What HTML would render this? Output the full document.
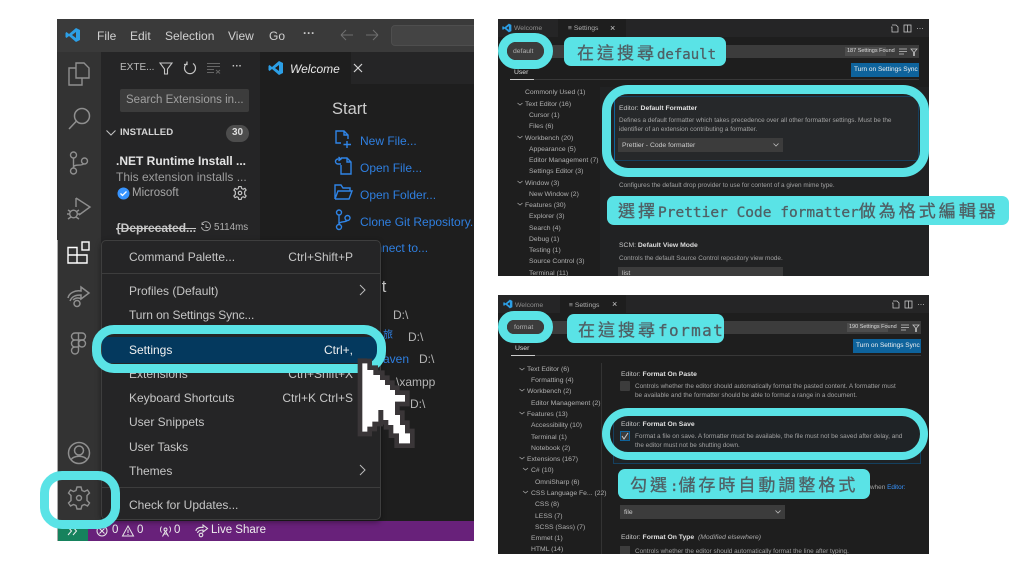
<!DOCTYPE html>
<html><head><meta charset="utf-8">
<style>
html,body{margin:0;padding:0;background:#fff}
#p{position:relative;width:1024px;height:576px;overflow:hidden;background:#fff;font-family:"Liberation Sans","Noto Sans CJK TC",sans-serif}
.b{position:absolute}
.t{position:absolute;white-space:nowrap;line-height:1;font-family:"Liberation Sans","Noto Sans CJK TC",sans-serif}
.r{position:absolute;white-space:nowrap;line-height:1;font-family:"Liberation Sans",sans-serif;text-align:right}
.m{font-size:12px;color:#c6c6c6}
.bl{color:#2f7fe0;font-size:12px}
.s{font-size:6.8px;color:#b0b0b0;margin-top:1px}
.d{font-size:6.4px;color:#a2a2a2;margin-top:.5px}
.lab{position:absolute;background:#5ae3e6;border-radius:7px;color:#4f6065;white-space:nowrap;font-family:"WenQuanYi Zen Hei","Noto Sans CJK TC",sans-serif;font-size:17px;letter-spacing:3px;-webkit-text-stroke:.3px #4f6065;box-sizing:border-box}
.lab span{font-family:"DejaVu Sans Mono",monospace}
.ring{position:absolute;border:8px solid #5ae3e6;box-sizing:border-box}
svg{position:absolute;overflow:visible}
</style></head><body><div id="p">

<!-- LEFT WINDOW -->
<div class="b" style="left:57px;top:19px;width:417px;height:522px;background:#1e1e1e"></div>
<div class="b" style="left:57px;top:19px;width:417px;height:33px;background:#3a3a3a"></div>
<div class="b" style="left:57px;top:52px;width:44px;height:469px;background:#333"></div>
<div class="b" style="left:101px;top:52px;width:159px;height:469px;background:#252526"></div>
<div class="b" style="left:260px;top:52px;width:214px;height:32px;background:#252526"></div>
<div class="b" style="left:260px;top:52px;width:91px;height:32px;background:#1e1e1e"></div>
<div class="b" style="left:57px;top:521px;width:417px;height:20px;background:#68217a"></div>
<div class="b" style="left:57px;top:521px;width:31px;height:20px;background:#16825d"></div>
<div class="b" style="left:57px;top:240px;width:1px;height:301px;background:#aaa"></div>

<svg style="left:65px;top:27px" width="16" height="16" viewBox="0 0 16 16"><path d="M11 1 L15 3 V13 L11 15 L4 9 L1.5 11 L0.5 10 V6 L1.5 5 L4 7 Z M11 5 L7 8 L11 11 Z" fill="#2c9fe6" fill-rule="evenodd"/></svg>
<div class="t m" style="left:97px;top:30px;color:#d0d0d0">File</div>
<div class="t m" style="left:130px;top:30px;color:#d0d0d0">Edit</div>
<div class="t m" style="left:165px;top:30px;color:#d0d0d0">Selection</div>
<div class="t m" style="left:228px;top:30px;color:#d0d0d0">View</div>
<div class="t m" style="left:269px;top:30px;color:#d0d0d0">Go</div>
<div class="t" style="left:303px;top:27px;font-size:12px;color:#c8c8c8;font-weight:bold">···</div>
<svg style="left:340px;top:28px" width="40" height="14" fill="none" stroke="#6f6f6f" stroke-width="1"><path d="M1 7H13M1 7L6 2M1 7L6 12M26 7H38M38 7L33 2M38 7L33 12"/></svg>
<div class="b" style="left:391px;top:25px;width:90px;height:21px;background:#444;border:1px solid #4e4e4e;border-radius:4px;box-sizing:border-box"></div>

<!-- activity icons -->
<svg style="left:68px;top:62px" width="22" height="24" fill="none" stroke="#8f8f8f" stroke-width="1.4"><path d="M8 1H16L21 6V16H8ZM8 6H1V23H14V16"/></svg>
<svg style="left:68px;top:107px" width="22" height="24" fill="none" stroke="#8f8f8f" stroke-width="1.5"><circle cx="14" cy="9" r="7.5"/><path d="M8.5 14L1 22"/></svg>
<svg style="left:69px;top:151px" width="20" height="24" fill="none" stroke="#8f8f8f" stroke-width="1.4"><circle cx="4.5" cy="4" r="3"/><circle cx="4.5" cy="20" r="3"/><circle cx="15.5" cy="10" r="3"/><path d="M4.5 7V17M4.5 16C5 13 13 15 14.5 13"/></svg>
<svg style="left:67px;top:196px" width="24" height="24" fill="none" stroke="#8f8f8f" stroke-width="1.4"><path d="M9 2L23 11L12 19M9 2V11"/><circle cx="6.5" cy="18" r="3.8"/><path d="M1 14L4 16M12 14L9 16M0 18H3M10 18H13M1 23L4 21M12 23L9 21"/></svg>
<svg style="left:67px;top:241px" width="24" height="26" fill="none" stroke="#fff" stroke-width="1.4"><path d="M1 6.5H10V22H1ZM1 14H20V22H10"/><rect x="15" y="1" width="7" height="8"/></svg>
<svg style="left:67px;top:286px" width="24" height="26" fill="none" stroke="#8f8f8f" stroke-width="1.5"><path d="M1 12C2 7 8 4 14 5V1L22 7L14 13V9C9 9 5 10 3 15"/><path d="M6 14C9 11 13 12 14 13"/><circle cx="10" cy="17.5" r="3"/></svg>
<svg style="left:71px;top:332px" width="16" height="22" fill="none" stroke="#8f8f8f" stroke-width="1.4"><path d="M7.5 1H4A3.5 3.5 0 0 0 4 8H7.5ZM7.5 1H11A3.5 3.5 0 0 1 11 8H7.5ZM7.5 8H4A3.5 3.5 0 0 0 4 15H7.5ZM7.5 8V15M7.5 15V18.5A3.5 3.5 0 1 1 4 15"/><circle cx="11" cy="11.5" r="3.5"/></svg>
<svg style="left:67px;top:441px" width="24" height="24" fill="none" stroke="#8f8f8f" stroke-width="1.5"><circle cx="12" cy="12" r="10.5"/><circle cx="12" cy="9.5" r="4.5"/><path d="M4 19C6 14 18 14 20 19"/></svg>
<svg style="left:67px;top:486px" width="24" height="24" viewBox="0 0 24 24" fill="none" stroke="#8f8f8f" stroke-width="1.4"><path d="M10 1H14L15 4.5L17.5 5.5L20.5 4L22.5 7L20 9.5V14.5L22.5 17L20.5 20L17.5 18.5L15 19.5L14 23H10L9 19.5L6.5 18.5L3.5 20L1.5 17L4 14.5V9.5L1.5 7L3.5 4L6.5 5.5L9 4.5Z"/><circle cx="12" cy="12" r="2.5"/></svg>

<!-- sidebar -->
<div class="t" style="left:120px;top:63px;font-size:10px;color:#bbb">EXTE...</div>
<svg style="left:159px;top:62px" width="14" height="13" fill="none" stroke="#c5c5c5" stroke-width="1.1"><path d="M1 1H13L8.5 7V12H5.5V7Z"/></svg>
<svg style="left:183px;top:61px" width="14" height="14" fill="none" stroke="#c5c5c5" stroke-width="1.2"><path d="M4 2.5A5.5 5.5 0 1 0 10 2.5M4 .5V3.5H1"/></svg>
<svg style="left:207px;top:62px" width="14" height="12" fill="none" stroke="#666" stroke-width="1"><path d="M0 1.5H13M0 4.5H13M0 7.5H7M0 10.5H7M9 8L13 11.5M13 8L9 11.5"/></svg>
<div class="t" style="left:232px;top:62px;font-size:10px;color:#c5c5c5;font-weight:bold">···</div>
<div class="b" style="left:120px;top:89px;width:129px;height:23px;background:#3c3c3c;border-radius:2px"></div>
<div class="t" style="left:126px;top:95px;font-size:11.500px;color:#a0a0a0">Search Extensions in...</div>
<svg style="left:106px;top:130px" width="10" height="6" fill="none" stroke="#c5c5c5"><path d="M.5 .5L5 5L9.5 .5"/></svg>
<div class="t" style="left:120px;top:128px;font-size:9.600px;color:#d5d5d5;font-weight:bold">INSTALLED</div>
<div class="b" style="left:226px;top:125px;width:23px;height:17px;background:#4d4d4d;border-radius:9px"></div>
<div class="t" style="left:232px;top:128px;font-size:10px;color:#ddd;font-weight:bold">30</div>
<div class="t" style="left:116px;top:155px;font-size:12px;color:#e4e4e4;font-weight:bold">.NET Runtime Install ...</div>
<div class="t" style="left:116px;top:171px;font-size:12px;color:#9d9d9d">This extension installs ...</div>
<svg style="left:117px;top:187px" width="13" height="13"><circle cx="6.5" cy="6.5" r="6" fill="#3794ff"/><path d="M3.5 6.5L5.5 8.5L9.5 4.5" stroke="#fff" fill="none" stroke-width="1.3"/></svg>
<div class="t" style="left:132px;top:188px;font-size:11.500px;color:#a8a8a8">Microsoft</div>
<svg style="left:233px;top:186px" width="14" height="14" viewBox="0 0 24 24" fill="none" stroke="#c5c5c5" stroke-width="2"><path d="M10 1H14L15 4.5L17.5 5.5L20.5 4L22.5 7L20 9.5V14.5L22.5 17L20.5 20L17.5 18.5L15 19.5L14 23H10L9 19.5L6.5 18.5L3.5 20L1.5 17L4 14.5V9.5L1.5 7L3.5 4L6.5 5.5L9 4.5Z"/><circle cx="12" cy="12" r="3"/></svg>
<div class="t" style="left:116px;top:222px;font-size:12px;color:#c8c8c8;font-weight:bold;text-decoration:line-through">{Deprecated...</div>
<svg style="left:201px;top:222px" width="10" height="10" fill="none" stroke="#b0b0b0" stroke-width=".9"><path d="M1 2A4.5 4.5 0 1 1 .5 5M1 .5V2.5H3M5 2.5V5.5H7.5"/></svg>
<div class="t" style="left:214px;top:223px;font-size:9.800px;color:#b0b0b0">5114ms</div>

<!-- editor -->
<svg style="left:268px;top:60px" width="16" height="16" viewBox="0 0 16 16"><path d="M11 1 L15 3 V13 L11 15 L4 9 L1.5 11 L0.5 10 V6 L1.5 5 L4 7 Z M11 5 L7 8 L11 11 Z" fill="#2c9fe6" fill-rule="evenodd"/></svg>
<div class="t m" style="left:290px;top:63px;font-style:italic;color:#e8e8e8">Welcome</div>
<svg style="left:353px;top:63px" width="10" height="10" stroke="#d5d5d5" stroke-width="1.2"><path d="M1 1L9 9M9 1L1 9"/></svg>
<div class="t" style="left:332px;top:101px;font-size:16.500px;color:#ccc">Start</div>
<svg style="left:334px;top:129px" width="19" height="20" fill="none" stroke="#2f84e6" stroke-width="1.4"><path d="M7 14H2V2H10L14 6V10M10 2V6H14M13 12V19M9.5 15.5H17"/></svg>
<div class="t bl" style="left:360px;top:135px">New File...</div>
<svg style="left:334px;top:156px" width="19" height="20" fill="none" stroke="#2f84e6" stroke-width="1.4"><path d="M7 2H13L17 6V18H7V9M13 2V6H17M7 8H4A2.5 2.5 0 0 1 4 3H6M4.5 1L7 3L4.5 5"/></svg>
<div class="t bl" style="left:360px;top:162px">Open File...</div>
<svg style="left:334px;top:184px" width="19" height="17" fill="none" stroke="#2f84e6" stroke-width="1.4"><path d="M1 15V1H7L9 4H16V7M1 15H15L18 7H4L1 15"/></svg>
<div class="t bl" style="left:360px;top:189px">Open Folder...</div>
<svg style="left:335px;top:209px" width="16" height="22" fill="none" stroke="#2f84e6" stroke-width="1.4"><circle cx="4" cy="3.5" r="2.5"/><circle cx="4" cy="18" r="2.5"/><circle cx="12.5" cy="9" r="2.5"/><path d="M4 6V15.5M4 15C4.5 12 11 13.5 12 11.5"/></svg>
<div class="t bl" style="left:360px;top:216px">Clone Git Repository...</div>
<div class="t bl" style="left:360px;top:242px">Connect to...</div>
<div class="t" style="left:334px;top:279px;font-size:16.500px;color:#ccc">Recent</div>
<div class="t" style="left:393px;top:309px;font-size:12px;color:#b5b5b5">D:\</div>
<div class="t bl" style="left:383px;top:331px;font-size:10px">旅</div>
<div class="t" style="left:408px;top:331px;font-size:12px;color:#b5b5b5">D:\</div>
<div class="t bl" style="left:373px;top:353px">maven</div>
<div class="t" style="left:419px;top:353px;font-size:12px;color:#b5b5b5">D:\</div>
<div class="t" style="left:396px;top:376px;font-size:12px;color:#b5b5b5">\xampp</div>
<div class="t" style="left:410px;top:398px;font-size:12px;color:#b5b5b5">D:\</div>

<div class="b" style="left:474px;top:19px;width:20px;height:522px;background:#fff"></div>

<!-- status -->
<svg style="left:67px;top:526px" width="11" height="10" fill="none" stroke="#eee"><path d="M1 1L4.5 5L1 9M6 1L9.5 5L6 9"/></svg>
<svg style="left:96px;top:525px" width="12" height="12" fill="none" stroke="#e8e8e8"><circle cx="6" cy="6" r="5"/><path d="M3.5 3.5L8.5 8.5M8.5 3.5L3.5 8.5"/></svg>
<div class="t" style="left:112px;top:525px;font-size:11.500px;color:#eee">0</div>
<svg style="left:122px;top:525px" width="12" height="12" fill="none" stroke="#e8e8e8"><path d="M6 1L11.5 11H.5ZM6 4.5V8M6 9V10"/></svg>
<div class="t" style="left:137px;top:525px;font-size:11.500px;color:#eee">0</div>
<svg style="left:159px;top:525px" width="13" height="12" fill="none" stroke="#e8e8e8"><circle cx="6.5" cy="4.5" r="1.5"/><path d="M6.5 6L3.5 11.5M6.5 6L9.5 11.5M2.5 1.5A5 5 0 0 0 2.5 7.5M10.5 1.5A5 5 0 0 1 10.5 7.5M4.5 9H8.5"/></svg>
<div class="t" style="left:174px;top:525px;font-size:11.500px;color:#eee">0</div>
<svg style="left:195px;top:524px" width="13" height="14" fill="none" stroke="#e8e8e8" stroke-width="1.1"><path d="M1 7C1 4 5 3 8 3.5V1L12.5 4.5L8 8V6C5 6 3 7 2.5 9"/><circle cx="6" cy="11" r="1.8"/></svg>
<div class="t" style="left:211px;top:525px;font-size:11.500px;color:#eee">Live Share</div>

<!-- menu -->
<div class="b" style="left:101px;top:240px;width:280px;height:280px;background:#252526;border:1px solid #3e3e3e;border-radius:5px;box-sizing:border-box;box-shadow:0 2px 6px rgba(0,0,0,.4)"></div>
<div class="b" style="left:102px;top:273px;width:278px;height:1px;background:#3d3d3d"></div>
<div class="b" style="left:102px;top:487px;width:278px;height:1px;background:#3d3d3d"></div>
<div class="t m" style="left:129px;top:251px">Command Palette...</div>
<div class="r m" style="right:671px;top:251px">Ctrl+Shift+P</div>
<div class="t m" style="left:129px;top:285px">Profiles (Default)</div>
<svg style="left:359px;top:284px" width="7" height="12" fill="none" stroke="#bbb"><path d="M1 1L6 6L1 11"/></svg>
<div class="t m" style="left:129px;top:309px;letter-spacing:-.1px">Turn on Settings Sync...</div>
<div class="b" style="left:102px;top:337px;width:278px;height:26px;background:#04395e"></div>
<div class="t m" style="left:129px;top:344px;color:#f0f0f0">Settings</div>
<div class="r m" style="right:671px;top:344px;color:#f0f0f0">Ctrl+,</div>
<div class="t m" style="left:129px;top:368px">Extensions</div>
<div class="r m" style="right:671px;top:368px">Ctrl+Shift+X</div>
<div class="t m" style="left:129px;top:392px">Keyboard Shortcuts</div>
<div class="r m" style="right:671px;top:392px">Ctrl+K Ctrl+S</div>
<div class="t m" style="left:129px;top:416px">User Snippets</div>
<div class="t m" style="left:129px;top:441px">User Tasks</div>
<div class="t m" style="left:129px;top:465px">Themes</div>
<svg style="left:359px;top:464px" width="7" height="12" fill="none" stroke="#bbb"><path d="M1 1L6 6L1 11"/></svg>
<div class="t m" style="left:129px;top:499px">Check for Updates...</div>

<div class="ring" style="left:92px;top:325px;width:294px;height:48px;border-width:9px;border-radius:22px"></div>
<div class="ring" style="left:40px;top:471px;width:80px;height:58px;border-width:9px;border-radius:22px"></div>

<!-- cursor -->
<svg style="left:250px;top:270px" width="230" height="290" viewBox="0 0 690 870">
<path d="M337 265V485H352V470H367V455H385V420H400V450H415V465H430V490H447V520H480V490H465V465H450V435H435V395H465V375H435V360H420V345H405V330H390V315H370V300H352V280H337Z" fill="#fff" stroke="#3a3638" stroke-width="28" paint-order="stroke"/>
</svg>

<!-- RIGHT TOP -->
<div class="b" style="left:498px;top:19px;width:431px;height:257px;background:#1e1e1e"></div>
<div class="b" style="left:498px;top:19px;width:431px;height:18px;background:#252526"></div>
<div class="b" style="left:558px;top:19px;width:68px;height:18px;background:#1e1e1e"></div>
<svg style="left:502px;top:23px" width="10" height="10" viewBox="0 0 16 16"><path d="M11 1 L15 3 V13 L11 15 L4 9 L1.5 11 L0.5 10 V6 L1.5 5 L4 7 Z M11 5 L7 8 L11 11 Z" fill="#2c9fe6" fill-rule="evenodd"/></svg>
<div class="t s" style="left:514px;top:25px;color:#8f8f8f">Welcome</div>
<div class="t s" style="left:568px;top:25px">≡ Settings</div>
<div class="t" style="left:610px;top:24px;font-size:9px;color:#ccc">×</div>
<svg style="left:890px;top:24px" width="34" height="9" fill="none" stroke="#c5c5c5" stroke-width=".8"><path d="M2 1H6L8 3V8H2V3H1"/><rect x="14" y="1" width="7" height="7"/><path d="M17.5 1V8M27 4.5H28M29.5 4.5H30.5M32 4.5H33"/></svg>
<div class="b" style="left:509px;top:45px;width:410px;height:13px;background:#3c3c3c"></div>
<div class="b" style="left:845px;top:47px;width:41px;height:9px;background:#4d4d4d"></div>
<div class="t" style="left:847px;top:49px;font-size:5.500px;color:#ddd">187 Settings Found</div>
<svg style="left:899px;top:48px" width="19" height="8" fill="none" stroke="#c5c5c5" stroke-width=".8"><path d="M0 1H8M0 3.5H8M0 6H5M12 1H18L15.5 4V7.5H14.5V4Z"/></svg>
<div class="b" style="left:851px;top:63px;width:68px;height:14px;background:#0e639c"></div>
<div class="t" style="left:854px;top:67px;font-size:6.500px;color:#f0f0f0">Turn on Settings Sync</div>
<div class="b" style="left:510px;top:79px;width:409px;height:1px;background:#383838"></div>
<div class="b" style="left:510px;top:79px;width:24px;height:1px;background:#ccc"></div>
<div class="b" style="left:600px;top:87px;width:329px;height:189px;background:#212223"></div>
<div class="t s" style="left:525px;top:89px">Commonly Used (1)</div>
<div class="t s" style="left:525px;top:101px">Text Editor (16)</div>
<div class="t s" style="left:529px;top:112px">Cursor (1)</div>
<div class="t s" style="left:529px;top:123px">Files (6)</div>
<div class="t s" style="left:525px;top:135px">Workbench (20)</div>
<div class="t s" style="left:529px;top:146px">Appearance (5)</div>
<div class="t s" style="left:529px;top:157px">Editor Management (7)</div>
<div class="t s" style="left:529px;top:168px">Settings Editor (3)</div>
<div class="t s" style="left:525px;top:180px">Window (3)</div>
<div class="t s" style="left:529px;top:191px">New Window (2)</div>
<div class="t s" style="left:525px;top:202px">Features (30)</div>
<div class="t s" style="left:529px;top:213px">Explorer (3)</div>
<div class="t s" style="left:529px;top:225px">Search (4)</div>
<div class="t s" style="left:529px;top:236px">Debug (1)</div>
<div class="t s" style="left:529px;top:247px">Testing (1)</div>
<div class="t s" style="left:529px;top:258px">Source Control (3)</div>
<div class="t s" style="left:529px;top:270px">Terminal (11)</div>
<svg style="left:517px;top:102px" width="6" height="170" fill="none" stroke="#aaa" stroke-width=".7"><path d="M.5 1L3 3L5.5 1M.5 34L3 36L5.5 34M.5 79L3 81L5.5 79M.5 101L3 103L5.5 101"/></svg>
<div class="b" style="left:614px;top:96px;width:305px;height:65px;background:#26282a;border:1px solid #15405f;border-left:1px solid #0e639c;box-sizing:border-box"></div>
<div class="t s" style="left:619px;top:105px;color:#c8c8c8">Editor: <b style="color:#e0e0e0">Default Formatter</b></div>
<div class="t d" style="left:619px;top:117px">Defines a default formatter which takes precedence over all other formatter settings. Must be the</div>
<div class="t d" style="left:619px;top:126px">identifier of an extension contributing a formatter.</div>
<div class="b" style="left:618px;top:138px;width:165px;height:14px;background:#3c3c3c"></div>
<div class="t s" style="left:622px;top:142px;color:#ccc">Prettier - Code formatter</div>
<svg style="left:773px;top:143px" width="6" height="4" fill="none" stroke="#bbb" stroke-width=".8"><path d="M.5 .5L3 3L5.5 .5"/></svg>
<div class="ring" style="left:602px;top:85px;width:327px;height:92px;border-width:9px;border-radius:26px"></div>
<div class="t d" style="left:619px;top:182px">Configures the default drop provider to use for content of a given mime type.</div>
<div class="t s" style="left:619px;top:242px;color:#c8c8c8">SCM: <b style="color:#ddd">Default View Mode</b></div>
<div class="t d" style="left:619px;top:255px">Controls the default Source Control repository view mode.</div>
<div class="b" style="left:618px;top:267px;width:165px;height:9px;background:#3c3c3c"></div>
<div class="t s" style="left:622px;top:270px;color:#ccc">list</div>
<div class="ring" style="left:498px;top:33px;width:55px;height:36px;border-width:9px;border-radius:18px"></div>
<div class="b" style="left:507px;top:42px;width:37px;height:18px;background:#3c3c3c;border-radius:9px"></div>
<div class="t s" style="left:513px;top:48px">default</div>
<div class="t s" style="left:514px;top:69px;color:#ddd">User</div>
<div class="lab" style="left:564px;top:37px;width:162px;height:29px;padding-left:13px;line-height:29px">在這搜尋<span style="font-size:14px;letter-spacing:0">default</span></div>
<div class="lab" style="left:607px;top:196px;width:402px;height:29px;padding-left:11px;line-height:28px">選擇<span style="font-size:14.500px;letter-spacing:0">Prettier Code formatter</span>做為格式編輯器</div>

<!-- RIGHT BOTTOM -->
<div class="b" style="left:498px;top:295px;width:431px;height:259px;background:#1e1e1e"></div>
<div class="b" style="left:498px;top:295px;width:431px;height:18px;background:#252526"></div>
<div class="b" style="left:560px;top:295px;width:66px;height:18px;background:#1e1e1e"></div>
<svg style="left:503px;top:299px" width="10" height="10" viewBox="0 0 16 16"><path d="M11 1 L15 3 V13 L11 15 L4 9 L1.5 11 L0.5 10 V6 L1.5 5 L4 7 Z M11 5 L7 8 L11 11 Z" fill="#2c9fe6" fill-rule="evenodd"/></svg>
<div class="t s" style="left:515px;top:302px;color:#8f8f8f">Welcome</div>
<div class="t s" style="left:569px;top:302px">≡ Settings</div>
<div class="t" style="left:612px;top:300px;font-size:9px;color:#ccc">×</div>
<svg style="left:891px;top:300px" width="34" height="9" fill="none" stroke="#c5c5c5" stroke-width=".8"><path d="M2 1H6L8 3V8H2V3H1"/><rect x="14" y="1" width="7" height="7"/><path d="M17.5 1V8M27 4.5H28M29.5 4.5H30.5M32 4.5H33"/></svg>
<div class="b" style="left:511px;top:321px;width:410px;height:13px;background:#3c3c3c"></div>
<div class="b" style="left:847px;top:323px;width:41px;height:9px;background:#4d4d4d"></div>
<div class="t" style="left:849px;top:325px;font-size:5.500px;color:#ddd">190 Settings Found</div>
<svg style="left:901px;top:324px" width="19" height="8" fill="none" stroke="#c5c5c5" stroke-width=".8"><path d="M0 1H8M0 3.5H8M0 6H5M12 1H18L15.5 4V7.5H14.5V4Z"/></svg>
<div class="b" style="left:853px;top:339px;width:68px;height:14px;background:#0e639c"></div>
<div class="t" style="left:856px;top:343px;font-size:6.500px;color:#f0f0f0">Turn on Settings Sync</div>
<div class="b" style="left:511px;top:355px;width:410px;height:1px;background:#383838"></div>
<div class="b" style="left:511px;top:355px;width:24px;height:1px;background:#ccc"></div>
<div class="b" style="left:601px;top:363px;width:1px;height:191px;background:#333"></div>
<div class="t s" style="left:527px;top:366px">Text Editor (6)</div>
<div class="t s" style="left:531px;top:377px">Formatting (4)</div>
<div class="t s" style="left:527px;top:388px">Workbench (2)</div>
<div class="t s" style="left:531px;top:400px">Editor Management (2)</div>
<div class="t s" style="left:527px;top:411px">Features (13)</div>
<div class="t s" style="left:531px;top:422px">Accessibility (10)</div>
<div class="t s" style="left:531px;top:434px">Terminal (1)</div>
<div class="t s" style="left:531px;top:445px">Notebook (2)</div>
<div class="t s" style="left:527px;top:456px">Extensions (167)</div>
<div class="t s" style="left:531px;top:467px">C# (10)</div>
<div class="t s" style="left:535px;top:479px">OmniSharp (6)</div>
<div class="t s" style="left:531px;top:490px">CSS Language Fe... (22)</div>
<div class="t s" style="left:535px;top:501px">CSS (8)</div>
<div class="t s" style="left:535px;top:513px">LESS (7)</div>
<div class="t s" style="left:535px;top:524px">SCSS (Sass) (7)</div>
<div class="t s" style="left:531px;top:535px">Emmet (1)</div>
<div class="t s" style="left:531px;top:546px">HTML (14)</div>
<svg style="left:519px;top:367px" width="12" height="135" fill="none" stroke="#aaa" stroke-width=".7"><path d="M.5 1L3 3L5.5 1M.5 22L3 24L5.5 22M.5 45L3 47L5.5 45M.5 90L3 92L5.5 90M4 101L6.5 103L9 101M4 124L6.5 126L9 124"/></svg>
<div class="t s" style="left:621px;top:371px;color:#c8c8c8">Editor: <b style="color:#e0e0e0">Format On Paste</b></div>
<div class="b" style="left:620px;top:381px;width:10px;height:10px;background:#3c3c3c;border-radius:1px"></div>
<div class="t d" style="left:635px;top:383px">Controls whether the editor should automatically format the pasted content. A formatter must</div>
<div class="t d" style="left:635px;top:392px">be available and the formatter should be able to format a range in a document.</div>
<div class="b" style="left:613px;top:415px;width:308px;height:49px;background:#1f2326;border:1px solid #15405f;box-sizing:border-box"></div>
<div class="t s" style="left:621px;top:421px;color:#c8c8c8">Editor: <b style="color:#e0e0e0">Format On Save</b></div>
<div class="b" style="left:620px;top:431px;width:10px;height:10px;background:#3c3c3c;border:1px solid #0e639c;box-sizing:border-box"></div>
<svg style="left:620px;top:431px" width="10" height="10" fill="none" stroke="#ccc" stroke-width="1"><path d="M2 5L4 8L8 2"/></svg>
<div class="t d" style="left:635px;top:433px">Format a file on save. A formatter must be available, the file must not be saved after delay, and</div>
<div class="t d" style="left:635px;top:442px">the editor must not be shutting down.</div>
<div class="ring" style="left:602px;top:408px;width:326px;height:52px;border-width:8px;border-radius:26px"></div>
<div class="t d" style="left:870px;top:484px">when <span style="color:#3794ff">Editor:</span></div>
<div class="b" style="left:620px;top:505px;width:165px;height:14px;background:#3c3c3c"></div>
<div class="t s" style="left:624px;top:509px;color:#ccc">file</div>
<svg style="left:775px;top:510px" width="6" height="4" fill="none" stroke="#bbb" stroke-width=".8"><path d="M.5 .5L3 3L5.5 .5"/></svg>
<div class="t s" style="left:621px;top:534px;color:#c8c8c8">Editor: <b style="color:#e0e0e0">Format On Type</b> &nbsp;<i style="color:#aaa">(Modified elsewhere)</i></div>
<div class="b" style="left:620px;top:546px;width:10px;height:8px;background:#3c3c3c"></div>
<div class="t d" style="left:635px;top:548px">Controls whether the editor should automatically format the line after typing.</div>
<div class="ring" style="left:498px;top:311px;width:55px;height:32px;border-width:9px;border-radius:16px"></div>
<div class="b" style="left:507px;top:320px;width:37px;height:14px;background:#3c3c3c;border-radius:7px"></div>
<div class="t s" style="left:514px;top:324px">format</div>
<div class="t s" style="left:515px;top:345px;color:#ddd">User</div>
<div class="lab" style="left:567px;top:314px;width:157px;height:29px;padding-left:11px;line-height:29px">在這搜尋<span style="font-size:16px;letter-spacing:1.400px">format</span></div>
<div class="lab" style="left:618px;top:469px;width:252px;height:30px;padding-left:12px;line-height:29px">勾選<span style="font-size:14px;letter-spacing:0">:</span>儲存時自動調整格式</div>

</div></body></html>
